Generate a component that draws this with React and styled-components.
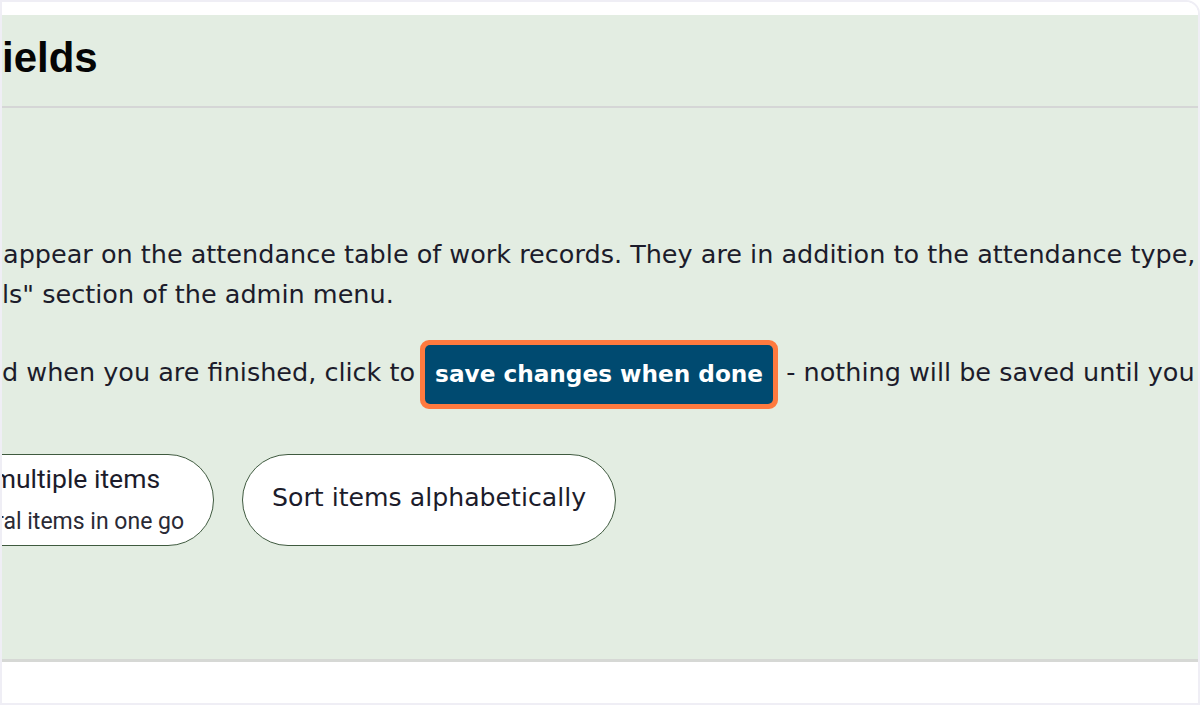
import React from "react";
import styled, { createGlobalStyle } from "styled-components";

const GlobalStyle = createGlobalStyle`
  html, body {
    margin: 0;
    padding: 0;
    background: #ffffff;
  }
  * {
    box-sizing: border-box;
  }
`;

const Frame = styled.div`
  width: 1200px;
  height: 705px;
  border: 2px solid #efeef5;
  border-top-right-radius: 14px;
  background: #ffffff;
  display: flex;
  flex-direction: column;
  overflow: hidden;
`;

const TopStrip = styled.div`
  height: 13px;
  flex: none;
  background: #ffffff;
`;

const Panel = styled.section`
  height: 647px;
  flex: none;
  background: #e3ede2;
  border-bottom: 3px solid #d6d8d5;
  display: flex;
  flex-direction: column;
  overflow: hidden;
  color: #1c1c2b;
`;

const Header = styled.header`
  height: 93px;
  flex: none;
  display: flex;
  align-items: center;
  border-bottom: 2px solid #d5d6d6;
  padding-bottom: 6px;
`;

const Title = styled.h1`
  margin: 0;
  font-family: "Liberation Sans", Arial, sans-serif;
  font-weight: 700;
  font-size: 42px;
  color: #050505;
`;

const Body = styled.div`
  padding-top: 126px;
  font-family: "DejaVu Sans", Verdana, sans-serif;
  font-size: 25.5px;
  line-height: 40px;
`;

const Para = styled.p`
  margin: 0 0 38px;
  white-space: nowrap;
`;

const Line = styled.span`
  display: block;
  margin-left: ${(p) => p.$shift || 0}px;
`;

const SaveButton = styled.span`
  display: inline-block;
  vertical-align: middle;
  margin: -16px 0 -16px 5px;
  border: 5px solid #ff7a3f;
  border-radius: 9px;
  background: #ff7a3f;
`;

const SaveInner = styled.span`
  display: block;
  background: #004a70;
  color: #ffffff;
  border-radius: 5px;
  padding: 9px 10px 10px;
  font-weight: 700;
  font-size: 23.2px;
  line-height: 40px;
`;

const ButtonRow = styled.div`
  display: flex;
  gap: 28px;
  margin-top: 61px;
`;

const PillButton = styled.button`
  height: 92px;
  flex: none;
  margin-left: ${(p) => p.$offset || 0}px;
  padding: 0 29px;
  background: #ffffff;
  border: 1.5px solid #3f5a3f;
  border-radius: 46px;
  display: flex;
  flex-direction: column;
  justify-content: center;
  align-items: ${(p) => (p.$stacked ? "flex-end" : "center")};
  font-family: "DejaVu Sans", Verdana, sans-serif;
  color: #1c1c2b;
`;

const PillLabel = styled.span`
  font-size: 25.2px;
  line-height: 32px;
  margin-top: -3px;
`;

const PillTitle = styled.span`
  font-family: Roboto, "Liberation Sans", sans-serif;
  font-size: 26.5px;
  line-height: 28px;
  margin-right: 24px;
`;

const PillNote = styled.span`
  font-family: Roboto, "Liberation Sans", sans-serif;
  font-size: 23px;
  line-height: 26px;
  margin-top: 16px;
  color: #2a2a35;
`;

const Footer = styled.div`
  flex: 1;
  background: #ffffff;
`;

export default function App() {
  return (
    <>
      <GlobalStyle />
      <Frame>
        <TopStrip />
        <Panel>
          <Header>
            <Title>ields</Title>
          </Header>
          <Body>
            <Para>
              <Line $shift={1}>
                appear on the attendance table of work records. They are in addition to the attendance type,
              </Line>
              <Line>ls" section of the admin menu.</Line>
            </Para>
            <Para>
              <Line>
                d when you are finished, click to<SaveButton>
                  <SaveInner>save changes when done</SaveInner>
                </SaveButton>{" "}
                - nothing will be saved until you
              </Line>
            </Para>
            <ButtonRow>
              <PillButton $stacked $offset={-83}>
                <PillTitle>multiple items</PillTitle>
                <PillNote>several items in one go</PillNote>
              </PillButton>
              <PillButton>
                <PillLabel>Sort items alphabetically</PillLabel>
              </PillButton>
            </ButtonRow>
          </Body>
        </Panel>
        <Footer />
      </Frame>
    </>
  );
}
